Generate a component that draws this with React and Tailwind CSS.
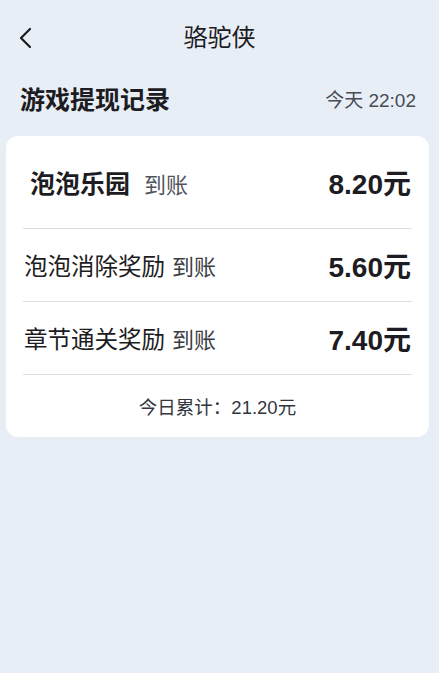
const rows = [
  { name: '泡泡消除奖励', amount: '5.60元' },
  { name: '章节通关奖励', amount: '7.40元' },
];

export default function App() {
  return (
    <div
      className="w-[439px] h-[673px] bg-[#e8eef6] text-[#1c1c22] overflow-hidden"
      style={{ fontFamily: '"Liberation Sans", "Noto Sans CJK SC", sans-serif' }}
    >
      <div className="relative h-[76px] flex items-center justify-center">
        <svg className="absolute left-[17px] top-[27px]" width="16" height="22" viewBox="0 0 16 22" fill="none">
          <path d="M13 2 L4 11 L13 20" stroke="#1c1c22" strokeWidth="2.2" strokeLinecap="round" strokeLinejoin="round" />
        </svg>
        <span className="text-[24px] leading-none">骆驼侠</span>
      </div>

      <div className="flex items-center justify-between px-[20px] h-[48px]">
        <span className="text-[25px] font-bold leading-none">游戏提现记录</span>
        <span className="text-[19px] text-[#474b55] leading-none pr-[3px]">今天 22:02</span>
      </div>

      <div className="mt-[12px] mx-[6px] w-[423px] bg-white rounded-[12px] px-[17px]">
        <div className="h-[93px] pt-[6px] flex items-center justify-between border-b border-[#dcdde0]">
          <div className="flex items-baseline pl-[7px]">
            <span className="text-[25px] font-bold">泡泡乐园</span>
            <span className="text-[22px] text-[#50545c] ml-[14px]">到账</span>
          </div>
          <span className="text-[28px] font-bold pr-[1px]">8.20元</span>
        </div>
        {rows.map((r) => (
          <div key={r.name} className="h-[73px] pt-[5px] flex items-center justify-between border-b border-[#dcdde0]">
            <div className="flex items-baseline pl-[1px]">
              <span className="text-[23.5px]">{r.name}</span>
              <span className="text-[22px] text-[#3a3d44] ml-[7px]">到账</span>
            </div>
            <span className="text-[28px] font-bold pr-[1px]">{r.amount}</span>
          </div>
        ))}
        <div className="h-[62px] pt-[4px] flex items-center justify-center">
          <span className="text-[18.5px] text-[#33363d]">今日累计：21.20元</span>
        </div>
      </div>
    </div>
  );
}
